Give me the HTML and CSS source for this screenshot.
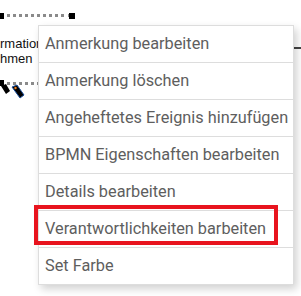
FILE: index.html
```html
<!DOCTYPE html>
<html lang="en">
<head>
    <meta charset="UTF-8">
    <title>Kontextmenü</title>
    <link rel="stylesheet" href="styles.css">
</head>
<body>
    <div class="canvas">
        <!-- selected task shape, mostly scrolled out of view -->
        <div class="shape">
            <span class="handle handle-tl"></span>
            <span class="handle handle-tr"></span>
            <span class="handle handle-bl"></span>
            <div class="shape-label">rmation<br>hmen</div>
            <svg class="tags" width="26" height="18" viewBox="0 0 26 18">
                <path d="M1 3 L6 1 L10 8 L6 11 Z" fill="#000"/>
                <path d="M12 4 L17 2 L24 12 L20 15 Z" fill="#000" stroke="#1a4f9c" stroke-width="1"/>
                <circle cx="15.5" cy="5" r="1.2" fill="#f08020"/>
            </svg>
        </div>
        <div class="edge"></div>

        <ul class="context-menu">
            <li>Anmerkung bearbeiten</li>
            <li>Anmerkung löschen</li>
            <li>Angeheftetes Ereignis hinzufügen</li>
            <li>BPMN Eigenschaften bearbeiten</li>
            <li>Details bearbeiten</li>
            <li>Verantwortlichkeiten barbeiten</li>
            <li>Set Farbe</li>
        </ul>
        <div class="highlight"></div>
    </div>
</body>
</html>
```

FILE: styles.css
```css
body {
    margin: 0;
    background: #fff;
    font-family: Roboto, 'Noto Sans', sans-serif;
}

.canvas {
    position: relative;
    width: 301px;
    height: 296px;
    overflow: hidden;
}

.shape {
    position: absolute;
    left: 0;
    top: 14px;
    width: 72px;
    height: 65px;
    border-top: 3px dotted #8a8a8a;
    border-bottom: 3px dotted #8a8a8a;
}

.handle {
    position: absolute;
    width: 6px;
    height: 6px;
    background: #000;
}

.handle-tl { left: -2px; top: -4px; }
.handle-tr { left: 69px; top: -4px; }
.handle-bl { left: -2px; top: 63px; }

.shape-label {
    position: absolute;
    left: 0;
    top: 19px;
    font-family: 'Liberation Sans', Arial, sans-serif;
    font-size: 13px;
    line-height: 15px;
    color: #111;
    white-space: nowrap;
}

.tags {
    position: absolute;
    left: 0;
    top: 66px;
}

.edge {
    position: absolute;
    left: 290px;
    top: 47px;
    width: 11px;
    height: 2px;
    background: #444;
}

.context-menu {
    position: absolute;
    left: 38px;
    top: 25px;
    width: 254px;
    margin: 0;
    padding: 0;
    list-style: none;
    background: #fff;
    border: 1px solid #ddd;
    box-shadow: 3px 4px 8px rgba(0, 0, 0, 0.18);
}

.context-menu li {
    height: 36px;
    line-height: 36px;
    padding: 0 6px;
    font-size: 16.3px;
    color: #5e5e5e;
    border-bottom: 1px solid #ddd;
    white-space: nowrap;
}

.context-menu li:last-child {
    border-bottom: none;
}

.highlight {
    position: absolute;
    left: 34px;
    top: 205px;
    width: 236px;
    height: 32px;
    border: 4px solid #e8141e;
}
```
